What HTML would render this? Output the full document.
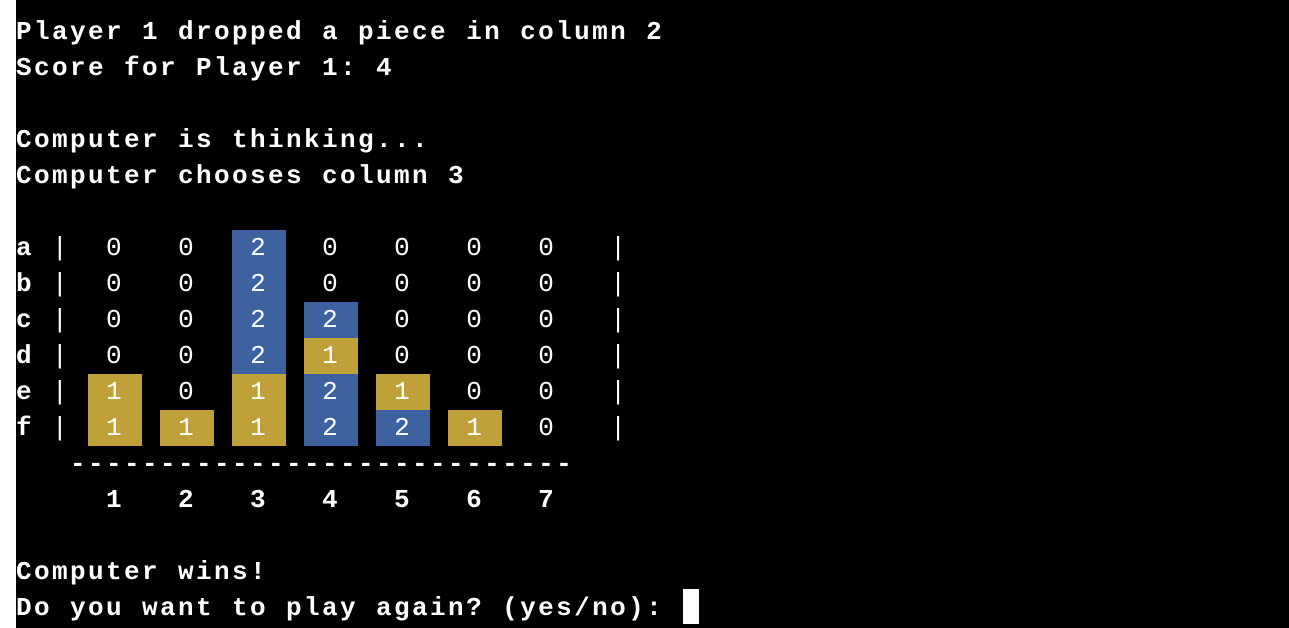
<!DOCTYPE html>
<html><head><meta charset="utf-8"><style>
html,body{margin:0;padding:0;background:#fff;}
#t{position:absolute;left:16px;top:0;width:1273px;height:628px;background:#000;overflow:hidden;}
.l{position:absolute;left:0;height:36px;line-height:36px;white-space:pre;color:#fff;
font-family:"Liberation Mono",monospace;font-weight:bold;font-size:26px;letter-spacing:2.4px;}
.b{font-weight:normal}
.c{display:inline-block;height:36px;vertical-align:top;}
.y{background:#c0a038}.u{background:#3e62a0}
#cur{position:absolute;left:667px;top:589px;width:16px;height:35px;background:#fff;}
</style></head><body><div id="t">
<div class="l" style="top:14px">Player 1 dropped a piece in column 2</div>
<div class="l" style="top:50px">Score for Player 1: 4</div>
<div class="l" style="top:122px">Computer is thinking...</div>
<div class="l" style="top:158px">Computer chooses column 3</div>
<div class="l" style="top:230px">a<span class="b"> | <span class="c"> 0 </span> <span class="c"> 0 </span> <span class="c u"> 2 </span> <span class="c"> 0 </span> <span class="c"> 0 </span> <span class="c"> 0 </span> <span class="c"> 0 </span>  |</span></div>
<div class="l" style="top:266px">b<span class="b"> | <span class="c"> 0 </span> <span class="c"> 0 </span> <span class="c u"> 2 </span> <span class="c"> 0 </span> <span class="c"> 0 </span> <span class="c"> 0 </span> <span class="c"> 0 </span>  |</span></div>
<div class="l" style="top:302px">c<span class="b"> | <span class="c"> 0 </span> <span class="c"> 0 </span> <span class="c u"> 2 </span> <span class="c u"> 2 </span> <span class="c"> 0 </span> <span class="c"> 0 </span> <span class="c"> 0 </span>  |</span></div>
<div class="l" style="top:338px">d<span class="b"> | <span class="c"> 0 </span> <span class="c"> 0 </span> <span class="c u"> 2 </span> <span class="c y"> 1 </span> <span class="c"> 0 </span> <span class="c"> 0 </span> <span class="c"> 0 </span>  |</span></div>
<div class="l" style="top:374px">e<span class="b"> | <span class="c y"> 1 </span> <span class="c"> 0 </span> <span class="c y"> 1 </span> <span class="c u"> 2 </span> <span class="c y"> 1 </span> <span class="c"> 0 </span> <span class="c"> 0 </span>  |</span></div>
<div class="l" style="top:410px">f<span class="b"> | <span class="c y"> 1 </span> <span class="c y"> 1 </span> <span class="c y"> 1 </span> <span class="c u"> 2 </span> <span class="c u"> 2 </span> <span class="c y"> 1 </span> <span class="c"> 0 </span>  |</span></div>
<div class="l" style="top:446px">   ----------------------------</div>
<div class="l" style="top:482px">     1   2   3   4   5   6   7</div>
<div class="l" style="top:554px">Computer wins!</div>
<div class="l" style="top:590px">Do you want to play again? (yes/no): </div>
<div id="cur"></div>
</div></body></html>
